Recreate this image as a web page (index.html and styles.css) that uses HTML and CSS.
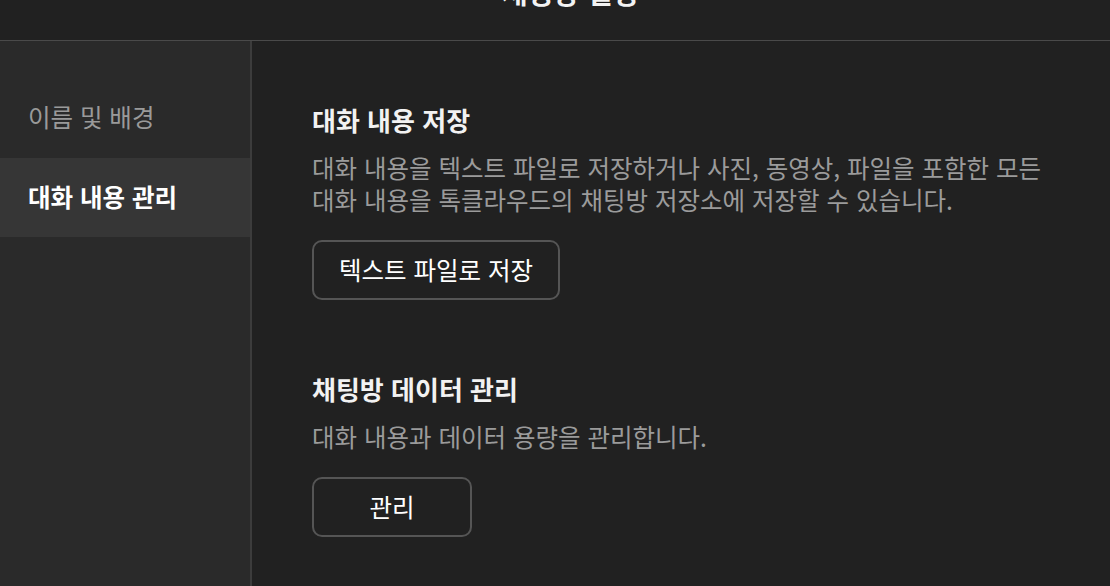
FILE: index.html
```html
<!DOCTYPE html>
<html lang="ko">
<head>
    <meta charset="UTF-8">
    <meta name="viewport" content="width=device-width, initial-scale=1.0">
    <title>채팅방 설정</title>
    <link rel="stylesheet" href="styles.css">
</head>
<body>
    <header class="top-bar">
        <h1 class="top-title">채팅방 설정</h1>
    </header>

    <div class="settings">
        <nav class="side-menu">
            <div class="menu-item">이름 및 배경</div>
            <div class="menu-item active">대화 내용 관리</div>
        </nav>

        <main class="content">
            <section class="block">
                <h2>대화 내용 저장</h2>
                <p>대화 내용을 텍스트 파일로 저장하거나 사진, 동영상, 파일을 포함한 모든<br>대화 내용을 톡클라우드의 채팅방 저장소에 저장할 수 있습니다.</p>
                <button class="line-btn">텍스트 파일로 저장</button>
            </section>

            <section class="block">
                <h2>채팅방 데이터 관리</h2>
                <p>대화 내용과 데이터 용량을 관리합니다.</p>
                <button class="line-btn">관리</button>
            </section>
        </main>
    </div>
</body>
</html>
```

FILE: styles.css
```css
* {
    box-sizing: border-box;
}

html, body {
    height: 100%;
}

body {
    margin: 0;
    background: #212121;
    color: #f2f2f2;
    font-family: "Noto Sans CJK KR", "Noto Sans", sans-serif;
    display: flex;
    flex-direction: column;
    overflow: hidden;
}

.top-bar {
    height: 41px;
    flex: none;
    display: flex;
    justify-content: center;
    align-items: flex-end;
    border-bottom: 1px solid #4a4a4a;
    overflow: hidden;
}

.top-title {
    margin: 0;
    padding: 0 0 34px 30px;
    font-size: 28px;
    line-height: 28px;
    font-weight: 700;
    color: #f2f2f2;
}

.settings {
    flex: 1;
    display: flex;
}

.side-menu {
    width: 252px;
    flex: none;
    background: #2a2a2a;
    border-right: 2px solid #3c3c3c;
    padding-top: 37px;
}

.menu-item {
    height: 80px;
    display: flex;
    align-items: center;
    padding: 0 0 3px 28px;
    font-size: 24.5px;
    color: #9a9a9a;
}

.menu-item.active {
    background: #363636;
    color: #ffffff;
    font-weight: 700;
    height: 79px;
}

.content {
    flex: 1;
    padding: 63px 0 0 60px;
}

.block {
    margin-bottom: 73px;
}

.block h2 {
    margin: 0;
    font-size: 26px;
    line-height: 32px;
    font-weight: 700;
    color: #f2f2f2;
}

.block p {
    margin: 16px 0 24px;
    font-size: 24.5px;
    line-height: 32px;
    color: #9b9b9b;
}

.line-btn {
    display: block;
    height: 60px;
    min-width: 160px;
    padding: 0 25px 2px;
    background: transparent;
    border: 2px solid #555555;
    border-radius: 10px;
    color: #ffffff;
    font-family: inherit;
    font-size: 24.5px;
    cursor: pointer;
}
```
